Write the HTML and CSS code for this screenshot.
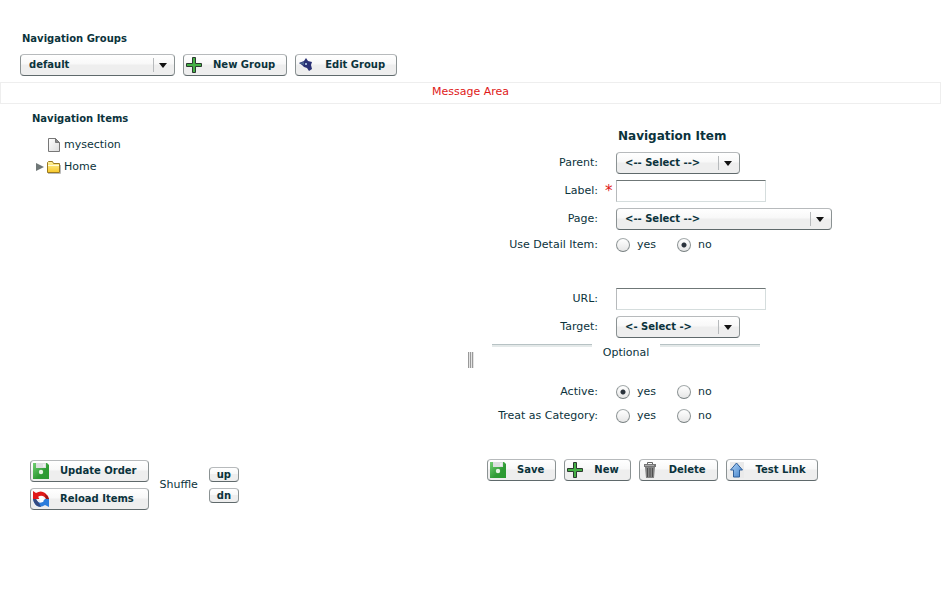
FILE: index.html
```html
<!DOCTYPE html>
<html lang="en">
<head>
<meta charset="utf-8">
<title>Navigation Manager</title>
<link rel="stylesheet" href="styles.css">
</head>
<body>
<svg class="sprite" aria-hidden="true">
  <defs>
    <linearGradient id="green" x1="0" y1="0" x2="1" y2="1"><stop offset="0" stop-color="#72cf72"/><stop offset=".6" stop-color="#2f9b35"/><stop offset="1" stop-color="#2a9a30"/></linearGradient>
    <linearGradient id="yellow" x1="0" y1="0" x2="0" y2="1"><stop offset="0" stop-color="#fff3a0"/><stop offset="1" stop-color="#f8c828"/></linearGradient>
    <linearGradient id="blue" x1="0" y1="0" x2="1" y2="1"><stop offset="0" stop-color="#b5d8fa"/><stop offset="1" stop-color="#3f7fc8"/></linearGradient>
    <linearGradient id="paper" x1="0" y1="0" x2="1" y2="1"><stop offset="0" stop-color="#fff"/><stop offset="1" stop-color="#dcdcdc"/></linearGradient>
  </defs>
  <symbol id="plus" viewBox="0 0 16 16"><path d="M6.500 .5h3v6h6v3h-6v6h-3v-6h-6v-3h6z" fill="#45b045" stroke="#2c3a30"/></symbol>
  <symbol id="edit" viewBox="0 0 16 16"><path d="M1 6l5-2 2-3 2 3 4 1-1 3 1 4-3 2-2-3-3-1-2-2z" fill="#2a3175"/><path d="M1 6l5-1v3z" fill="#4a6490"/><path d="M7 6h2v2H7z" fill="#9fb4d4"/></symbol>
  <symbol id="disk" viewBox="0 0 16 16"><path d="M0 0h14l2 2v14H0z" fill="url(#green)"/><path d="M3 0h10v5H3z" fill="#dcdfdf"/><path d="M10 1h2v3h-2z" fill="#eef0f0"/><circle cx="8" cy="9" r="2.200" fill="#e5f4e3"/></symbol>
  <symbol id="reload" viewBox="0 0 16 16"><path d="M0 0l3 2q5-3 9 0 3 2 4 6h-3q-1-2-3-3-3-1-5 1l2 2H0z" fill="#e01818"/><path d="M13 8h-3l1 2q-3 3-6 1-1-1-2-3H0q1 5 4 7 4 2 8-1l4 2V8z" fill="#2b7ddc"/><path d="M0 8h3q1 2 3 4l2 4q-7-1-8-8z" fill="#354a80"/><path d="M12 3q3 2 4 5h-3z" fill="#901818"/><path d="M8 5l4 4h-2v2H7V9H5z" fill="#fff"/></symbol>
  <symbol id="trash" viewBox="0 0 16 16"><path d="M5.500 2.500v-2h5v2" fill="none" stroke="#666"/><path d="M2 2h12v3H2z" fill="#777"/><path d="M3 5h10l-1 11H4z" fill="#858585"/><path d="M5.500 6v9M8 6v9M10.500 6v9" stroke="#505050"/><path d="M3 3.500h9" stroke="#aaa"/></symbol>
  <symbol id="up" viewBox="0 0 16 16"><path d="M1 0h14v16H1z" fill="#eaeaea"/><path d="M7.500 1l6 7h-3v7h-6V8h-3z" fill="url(#blue)" stroke="#2f5f9a" stroke-linejoin="round"/></symbol>
  <symbol id="page" viewBox="0 0 16 16"><path d="M2.500 1.500h7l4 4v9h-11z" fill="url(#paper)" stroke="#777"/><path d="M9.500 1.500v4h4z" fill="#888" stroke="#777"/></symbol>
  <symbol id="folder" viewBox="0 0 16 16"><path d="M1.500 13.500v-10l1-1h4l1 2h6v9z" fill="url(#yellow)" stroke="#9b7a20"/><path d="M2 6.500h11" stroke="#fffbd8"/><path d="M2 14.500h12.500V6" fill="none" stroke="#bbb"/></symbol>
  <symbol id="twisty" viewBox="0 0 8 8"><path d="M0 0l8 4-8 4z" fill="#6f7777"/></symbol>
</svg>

<header class="top">
  <label class="title" for="group">Navigation Groups</label>
  <div class="toolbar">
    <span class="combo"><select id="group" class="group-select"><option>default</option></select></span>
    <button class="btn" type="button"><svg><use href="#plus"/></svg>New Group</button>
    <button class="btn" type="button"><svg><use href="#edit"/></svg>Edit Group</button>
  </div>
</header>
<p class="message">Message Area</p>

<main class="split">
  <section class="items">
    <h2 class="title">Navigation Items</h2>
    <ul class="tree">
      <li><span class="twisty"></span><svg class="node"><use href="#page"/></svg>mysection</li>
      <li><span class="twisty"><svg><use href="#twisty"/></svg></span><svg class="node"><use href="#folder"/></svg>Home</li>
    </ul>
    <div class="order">
      <div class="stack">
        <button class="btn" type="button"><svg><use href="#disk"/></svg>Update Order</button>
        <button class="btn" type="button"><svg><use href="#reload"/></svg>Reload Items</button>
      </div>
      <span>Shuffle</span>
      <div class="stack">
        <button class="btn small" type="button">up</button>
        <button class="btn small" type="button">dn</button>
      </div>
    </div>
  </section>

  <div class="divider"><span class="grip"></span></div>

  <form class="detail">
    <h2 class="heading">Navigation Item</h2>
    <div class="row"><label for="parent">Parent:</label><i></i><span class="combo"><select id="parent" class="short"><option>&lt;-- Select --&gt;</option></select></span></div>
    <div class="row"><label for="name">Label:</label><i class="required">*</i><input id="name" class="text" type="text"></div>
    <div class="row"><label for="page-select">Page:</label><i></i><span class="combo"><select id="page-select" class="long"><option>&lt;-- Select --&gt;</option></select></span></div>
    <div class="row radios" role="radiogroup" aria-labelledby="detail-label"><span id="detail-label">Use Detail Item:</span><i></i>
      <label><input type="radio" name="detail">yes</label><label><input type="radio" name="detail" checked>no</label></div>
    <div class="row url"><label for="url">URL:</label><i></i><input id="url" class="text" type="text"></div>
    <div class="row"><label for="target">Target:</label><i></i><span class="combo"><select id="target" class="short"><option>&lt;- Select -&gt;</option></select></span></div>
    <div class="optional"><span>Optional</span></div>
    <div class="row radios" role="radiogroup" aria-labelledby="active-label"><span id="active-label">Active:</span><i></i>
      <label><input type="radio" name="active" checked>yes</label><label><input type="radio" name="active">no</label></div>
    <div class="row radios" role="radiogroup" aria-labelledby="category-label"><span id="category-label">Treat as Category:</span><i></i>
      <label><input type="radio" name="category">yes</label><label><input type="radio" name="category">no</label></div>
    <div class="toolbar actions">
      <button class="btn" type="button"><svg><use href="#disk"/></svg>Save</button>
      <button class="btn" type="button"><svg><use href="#plus"/></svg>New</button>
      <button class="btn" type="button"><svg><use href="#trash"/></svg>Delete</button>
      <button class="btn" type="button"><svg><use href="#up"/></svg>Test Link</button>
    </div>
  </form>
</main>
</body>
</html>
```
FILE: styles.css
```css
* { box-sizing: border-box; }
body, input, select, button {
  font-family: "DejaVu Sans", Verdana, sans-serif;
  line-height: 16px;
  color: #0b333c;
}
body { margin: 0; background: #fff; font-size: 11px; }
.sprite { position: absolute; width: 0; height: 0; }
i { font-style: normal; }

.top { padding: 31px 20px 6px; }
.title { display: block; margin: 0; padding-left: 2px; font-size: 10px; font-weight: bold; }
.toolbar { display: flex; gap: 8px; }
.top .toolbar { margin-top: 7px; }

.btn, .combo select {
  height: 22px;
  border: 1px solid;
  border-color: #b7babc #8b9293 #5f696b #8b9293;
  border-radius: 4px;
  background: linear-gradient(#fff 0, #f8f8f8 45%, #eee 50%, #eee 100%);
  font-size: 10px;
  font-weight: bold;
}
.btn { display: flex; align-items: center; gap: 11px; padding: 0 11px 0 2px; white-space: nowrap; }
.btn svg { flex: none; width: 16px; height: 16px; }
.btn.small { justify-content: center; width: 30px; height: 15px; padding: 0; }

.combo { position: relative; display: inline-flex; justify-self: start; }
.combo select { appearance: none; padding: 0 24px 0 8px; }
.combo::before, .combo::after { content: ""; position: absolute; pointer-events: none; }
.combo::before { right: 21px; top: 4px; height: 14px; border-left: 1px solid #b7babc; }
.combo::after { right: 8px; top: 9px; border: solid transparent; border-width: 5px 4px 0; border-top-color: #111; }
.group-select { width: 155px; }
.short { width: 124px; }
.long { width: 216px; }

.message { margin: 0; height: 22px; line-height: 18px; border: 1px solid #eee; text-align: center; color: #e01818; }

.split { display: grid; grid-template-columns: 1fr 7px 1fr; }
.items { display: flex; flex-direction: column; padding: 7px 30px 0; }
.tree { flex: 1; margin: 7px 0 0; padding: 0 0 0 6px; list-style: none; }
.tree li { display: flex; align-items: center; height: 22px; }
.twisty { display: flex; width: 10px; }
.twisty svg { width: 8px; height: 8px; }
.node { width: 16px; height: 16px; margin-right: 2px; }
.order { display: flex; align-items: center; gap: 11px; }
.stack { display: grid; gap: 6px; }

.divider { display: flex; justify-content: center; align-items: center; padding-top: 105px; }
.grip { width: 6px; height: 16px; background: repeating-linear-gradient(90deg, #999 0 1px, #e4e4e4 1px 2px); }

.detail { padding: 22px 0 29px 13px; }
.heading { margin: 0 0 6px 131px; padding: 0; font-size: 12px; line-height: 20px; }
.row { display: grid; grid-template-columns: 111px 18px 1fr; min-height: 22px; margin-bottom: 6px; line-height: 22px; }
.row > :first-child { text-align: right; }
.required { padding-left: 7px; color: #e01818; font-size: 15px; }
.text { width: 150px; height: 22px; border: 1px solid; border-color: #6f7777 #d5dddd #d5dddd #b7babc; background: #fff; }
.row.radios { grid-template-columns: 111px 18px 61px 1fr; min-height: 18px; line-height: 18px; }
.radios label { display: flex; align-items: center; gap: 7px; }
.radios input {
  appearance: none; width: 14px; height: 14px; margin: 0;
  border: 1px solid; border-color: #a5abac #8b9293 #777f80; border-radius: 50%;
  background: linear-gradient(#fff, #e6e6e6);
}
.radios input:checked { background: radial-gradient(circle, #2b333c 0 2px, transparent 3px), linear-gradient(#fff, #e6e6e6); }
.url { margin-top: 34px; }
.optional { display: flex; width: 268px; height: 39px; margin-left: 5px; justify-content: space-between; }
.optional::before, .optional::after { content: ""; width: 100px; height: 2px; border-top: 1px solid #b7c2c4; background: #e4e9e9; }
.optional span { line-height: 17px; }
.actions { margin-top: 34px; }
```
